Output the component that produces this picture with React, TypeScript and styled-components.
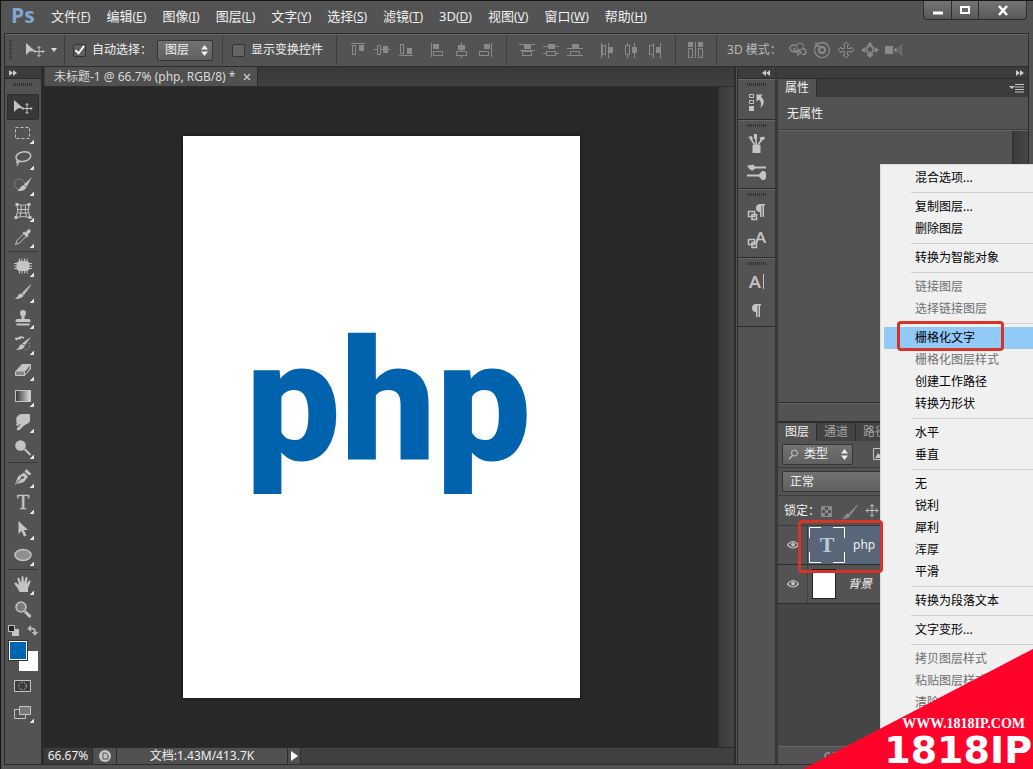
import React from 'react';
import styled, { createGlobalStyle, css } from 'styled-components';

const c = {
  panel: '#535353',
  strip: '#3c3c3c',
  edge: '#2c2c2c',
  light: '#666666',
  text: '#f0f0f0',
  icon: '#c4c4c4',
  dim: '#8a8a8a',
};

const GlobalStyle = createGlobalStyle`
  * { box-sizing: border-box; }
  body {
    margin: 0;
    background: ${c.panel};
    color: ${c.text};
    font-family: "Noto Sans", "Noto Sans CJK SC", sans-serif;
    font-size: 12px;
    line-height: 16px;
    overflow: hidden;
  }
  button, select, input { font: inherit; color: inherit; margin: 0; }
  button { border: 0; padding: 0; background: none; display: flex; align-items: center; justify-content: center; }
  svg { display: block; flex: none; overflow: visible; }
`;

/* ---------- window shell ---------- */

const Window = styled.div`
  position: relative;
  display: flex;
  flex-direction: column;
  height: 100vh;
  overflow: hidden;
  padding: 0 4px 4px 3px;
  background: ${c.panel};
  border-top: 1px solid #151515;
  border-left: 1px solid #151515;
`;

const MenuBar = styled.header`
  display: flex;
  align-items: flex-start;
  height: 32px;
  flex: none;
`;

const Logo = styled.span`
  width: 42px;
  padding-left: 7px;
  color: #7ea7d1;
  font: bold 21px/28px "Open Sans", sans-serif;
`;

const MenuList = styled.nav`
  display: flex;
  flex: 1;
  gap: 16px;
  padding-left: 5px;
`;

const MenuLink = styled.a`
  color: ${c.text};
  text-decoration: none;
  white-space: nowrap;
  font-size: 13px;
  line-height: 31px;
  small { font-size: 12px; }
`;

const WindowControls = styled.div`
  display: flex;
  height: 19px;
  margin-right: 2px;
  border: 1px solid ${c.edge};
  border-top: 0;
  border-radius: 0 0 4px 4px;
  background: linear-gradient(#747474, #585858);
`;

const WindowButton = styled.button<{ $wide?: boolean }>`
  width: ${p => (p.$wide ? 48 : 27)}px;
  & + & { border-left: 1px solid ${c.edge}; }
`;

const OptionsBar = styled.div`
  display: flex;
  align-items: center;
  height: 33px;
  flex: none;
  border: 1px solid ${c.edge};
  border-bottom: 0;
  box-shadow: inset 0 1px ${c.light};
  white-space: nowrap;
  overflow: hidden;
`;

const Rule = styled.i<{ $before?: number; $after?: number }>`
  flex: none;
  width: 1px;
  height: 30px;
  background: #3d3d3d;
  margin: 0 ${p => p.$after ?? 8}px 0 ${p => p.$before ?? 8}px;
`;

const Check = styled.label`
  display: flex;
  align-items: center;
  gap: 6px;
  input {
    appearance: none;
    width: 13px;
    height: 13px;
    border: 1px solid #333;
    border-radius: 2px;
    background: #646464;
  }
  input:checked {
    background: #5f5f5f url("data:image/svg+xml,%3Csvg xmlns='http://www.w3.org/2000/svg' viewBox='0 0 12 12'%3E%3Cpath d='M1.500 5.500L5 9L11 1' fill='none' stroke='white' stroke-width='2'/%3E%3C/svg%3E");
  }
`;

const SelectBox = styled.div<{ $grow?: boolean; $lead?: number }>`
  position: relative;
  display: flex;
  align-items: center;
  justify-content: flex-end;
  flex: ${p => (p.$grow ? 1 : 'none')};
  height: 21px;
  padding-right: 4px;
  border: 1px solid #343434;
  border-radius: 2px;
  background: linear-gradient(#727272, #606060);
  select {
    appearance: none;
    flex: 1;
    border: 0;
    background: none;
    outline: 0;
    width: ${p => (p.$lead ? 58 : 43)}px;
    padding: 0 0 0 ${p => p.$lead ?? 7}px;
  }
`;

const OptionSelect = styled(SelectBox)`
  margin-left: 5px;
`;

const IconSet = styled.div<{ $gap: number; $before?: number; $after?: number }>`
  display: flex;
  gap: ${p => p.$gap}px;
  margin-left: ${p => p.$before ?? 0}px;
  margin-right: ${p => p.$after ?? 0}px;
`;

const ModeLabel = styled.span`
  color: #b8b8b8;
`;

const Workspace = styled.div`
  display: flex;
  flex: 1;
  min-height: 0;
  border: 1px solid ${c.edge};
`;

const Strip = styled.div<{ $end?: boolean }>`
  display: flex;
  align-items: center;
  justify-content: ${p => (p.$end ? 'flex-end' : 'flex-start')};
  flex: none;
  height: 12px;
  padding: 0 4px 0 3px;
  background: ${c.strip};
  border-bottom: 1px solid ${c.edge};
`;

const Grip = styled.i<{ $tall?: boolean }>`
  display: block;
  flex: none;
  ${p =>
    p.$tall
      ? css`
          width: 3px;
          height: 20px;
          margin: 0 13px 0 4px;
          background: repeating-linear-gradient(#353535 0 1px, transparent 1px 2px);
        `
      : css`
          width: 20px;
          height: 3px;
          margin: 4px auto;
          background: repeating-linear-gradient(90deg, #303030 0 1px, transparent 1px 2px);
        `}
`;

/* ---------- tools ---------- */

const ToolColumn = styled.aside`
  display: flex;
  flex-direction: column;
  width: 36px;
  flex: none;
`;

const ToolStack = styled.div`
  display: flex;
  flex-direction: column;
  align-items: center;
  padding-top: 4px;
`;

const Tool = styled.button<{ $active?: boolean; $more?: boolean }>`
  position: relative;
  width: 32px;
  height: 26px;
  border-radius: 2px;
  ${p => p.$active && css`background: #383838; box-shadow: inset 0 0 0 1px #2e2e2e;`}
  ${p =>
    p.$more &&
    css`
      &::after {
        content: '';
        position: absolute;
        right: 5px;
        bottom: 2px;
        width: 4px;
        height: 4px;
        background: linear-gradient(135deg, transparent 50%, #e4e4e4 50%);
      }
    `}
`;

const ToolRule = styled.hr`
  width: 30px;
  height: 1px;
  margin: 1px 0;
  border: 0;
  background: #393939;
`;

const MiniRow = styled.div`
  display: flex;
  justify-content: space-between;
  width: 30px;
  height: 15px;
  padding-top: 2px;
`;

const Swatches = styled.div`
  display: grid;
  grid-template: 10px 10px 10px / 10px 9px 10px;
  margin: 3px 0 2px;
`;

const Swatch = styled.button<{ $front?: boolean }>`
  grid-area: ${p => (p.$front ? '1 / 1 / 3 / 3' : '2 / 2 / 4 / 4')};
  z-index: ${p => (p.$front ? 1 : 0)};
  background: ${p => (p.$front ? '#0066b0' : '#fff')};
  border: 1px solid #fff;
  ${p => p.$front && css`outline: 1px solid #333; margin: 0 1px 1px 0;`}
`;

/* ---------- document ---------- */

const DocumentColumn = styled.main`
  display: flex;
  flex-direction: column;
  flex: 1;
  min-width: 0;
  border-left: 3px solid ${c.edge};
  border-right: 2px solid ${c.edge};
`;

const DocTabs = styled.div`
  display: flex;
  flex: none;
  height: 20px;
  padding-left: 1px;
  background: linear-gradient(#383838, #404040);
  border-bottom: 1px solid ${c.edge};
`;

const DocTab = styled.div`
  display: flex;
  align-items: center;
  gap: 9px;
  padding: 0 7px 0 9px;
  background: #505050;
  border-right: 1px solid ${c.edge};
  color: #dadada;
  white-space: nowrap;
`;

const Stage = styled.div`
  display: flex;
  flex: 1;
  min-height: 0;
`;

const Pasteboard = styled.div`
  display: flex;
  flex: 1;
  align-items: center;
  justify-content: center;
  background: #282828;
`;

const Artboard = styled.div`
  width: 397px;
  height: 562px;
  padding: 164px 0 0 63px;
  background: #fff;
  box-shadow: 0 0 3px #111;
  overflow: hidden;
`;

const ArtText = styled.span`
  display: block;
  color: #0162ae;
  font: 900 169px/204px Roboto, sans-serif;
`;

const ScrollTrack = styled.div`
  width: 16px;
  background: linear-gradient(90deg, #3a3a3a, #464646);
  border-left: 1px solid ${c.edge};
`;

const StatusBar = styled.footer`
  display: flex;
  flex: none;
  height: 17px;
  background: #404040;
  border-top: 1px solid ${c.edge};
`;

const StatusCell = styled.div<{ $w: number; $dark?: boolean }>`
  display: flex;
  align-items: center;
  justify-content: center;
  width: ${p => p.$w}px;
  background: ${p => (p.$dark ? '#3b3b3b' : '#505050')};
  border-right: 1px solid ${c.edge};
  white-space: nowrap;
`;

/* ---------- right side ---------- */

const IconDock = styled.aside`
  display: flex;
  flex-direction: column;
  flex: none;
  width: 41px;
  margin-left: 1px;
  border-left: 1px solid ${c.edge};
  border-right: 3px solid #383838;
`;

const DockGroup = styled.div`
  display: flex;
  flex-direction: column;
  align-items: center;
  padding-bottom: 2px;
  border-bottom: 1px solid ${c.edge};
  box-shadow: inset 0 1px ${c.light};
`;

const DockGrip = styled(Grip)`
  margin-bottom: 3px;
`;

const DockButton = styled.button`
  width: 28px;
  height: 28px;
`;

const Panels = styled.aside`
  display: flex;
  flex-direction: column;
  flex: none;
  width: 250px;
`;

const PanelTabs = styled.div`
  display: flex;
  flex: none;
  height: 18px;
  background: ${c.strip};
`;

const PanelTab = styled.button<{ $active?: boolean }>`
  width: 39px;
  color: ${p => (p.$active ? '#f0f0f0' : '#a5a5a5')};
  background: ${p => (p.$active ? c.panel : '#434343')};
  border-right: 1px solid ${c.edge};
`;

const PanelMenu = styled.button`
  margin-left: auto;
  width: 24px;
`;

const PropertyTitle = styled.div`
  height: 33px;
  padding: 9px;
  flex: none;
  border-bottom: 1px solid #3b3b3b;
`;

const PropertyBody = styled.div`
  display: flex;
  justify-content: flex-end;
  flex: none;
  height: 273px;
  border-top: 1px solid ${c.light};
  border-bottom: 1px solid ${c.edge};
`;

const PanelFoot = styled.div`
  flex: none;
  height: 20px;
  border-top: 1px solid ${c.light};
  border-bottom: 2px solid ${c.edge};
`;

const PanelRow = styled.div<{ $h: number }>`
  display: flex;
  align-items: center;
  flex: none;
  gap: 20px;
  height: ${p => p.$h}px;
  padding: 0 4px;
  border-bottom: 1px solid #3b3b3b;
`;

const LockRow = styled(PanelRow)`
  gap: 0;
  padding-left: 6px;
`;

const FilterIcon = styled.span`
  position: absolute;
  left: 5px;
  top: 4px;
`;

const LayerList = styled.ul`
  flex: 1;
  min-height: 0;
  margin: 0;
  padding: 0;
  list-style: none;
  background: #454545;
`;

const LayerRow = styled.li`
  position: relative;
  display: flex;
  height: 39px;
  background: ${c.panel};
  border-bottom: 1px solid ${c.edge};
`;

const Eye = styled.button`
  width: 30px;
  border-right: 1px solid #404040;
`;

const LayerBody = styled.div<{ $selected?: boolean }>`
  display: flex;
  align-items: center;
  flex: 1;
  gap: ${p => (p.$selected ? 8 : 12)}px;
  padding-left: ${p => (p.$selected ? 1 : 4)}px;
  background: ${p => (p.$selected ? '#596579' : 'transparent')};
`;

const PageThumb = styled.i`
  width: 24px;
  height: 30px;
  background: #fff;
  border: 1px solid #222;
`;

const LayerFooter = styled.div`
  display: flex;
  align-items: center;
  flex: none;
  height: 18px;
  padding-left: 46px;
  border-top: 1px solid ${c.light};
`;

const Marker = styled.i<{ $top: number; $left: number; $w: number; $h: number }>`
  position: absolute;
  z-index: 5;
  top: ${p => p.$top}px;
  left: ${p => p.$left}px;
  width: ${p => p.$w}px;
  height: ${p => p.$h}px;
  border: 3px solid #d63429;
  border-radius: 4px;
  pointer-events: none;
`;

/* ---------- overlays ---------- */

const ContextMenu = styled.div`
  position: absolute;
  z-index: 3;
  top: 163px;
  right: 0;
  bottom: 0;
  width: 153px;
  padding: 2px 0 0 3px;
  background: #f0f0f0;
  border-top: 1px solid #dcdcdc;
  border-left: 1px solid #dcdcdc;
`;

const MenuGroup = styled.div`
  & + &::before {
    content: '';
    display: block;
    height: 1px;
    margin: 3px 0 3px 27px;
    background: #cfcfcf;
  }
`;

const MenuItem = styled.button<{ $active?: boolean }>`
  position: relative;
  width: 100%;
  height: 22px;
  padding-left: 31px;
  justify-content: flex-start;
  white-space: nowrap;
  color: #000;
  background: ${p => (p.$active ? '#91c9f7' : 'transparent')};
  &:disabled { color: #6f6f6f; }
`;

const Corner = styled.div`
  position: absolute;
  z-index: 6;
  right: 0;
  bottom: 0;
  width: 230px;
  height: 120px;
  display: flex;
  flex-direction: column;
  align-items: flex-end;
  justify-content: flex-end;
  background: #ff032b;
  clip-path: polygon(0 100%, 100% 0, 100% 100%);
  color: #fff;
`;

const SiteAddress = styled.span`
  padding-right: 8px;
  font: bold 14px/14px "Liberation Serif", serif;
`;

const SiteName = styled.strong`
  padding-right: 1px;
  font: bold 38px/38px "DejaVu Sans", sans-serif;
`;

/* ---------- drawings ---------- */

const Icon = ({ w = 18, h = 18, color = c.icon, children }: { w?: number; h?: number; color?: string; children: React.ReactNode }) => (
  <svg width={w} height={h} viewBox={`0 0 ${w} ${h}`} fill="none" stroke={color} color={color} aria-hidden="true">
    {children}
  </svg>
);

const fill = { fill: 'currentColor', stroke: 'none' };

const UpDown = () => (
  <Icon w={7} h={11} color="#eee"><path d="M0 4.500L3.500 0L7 4.500zM0 6.500L3.500 11L7 6.500z" {...fill} /></Icon>
);
const Chevrons = ({ left }: { left?: boolean }) => (
  <Icon w={9} h={6} color="#ccc"><path d={left ? 'M4 0v6L0 3zM8 0v6L4 3z' : 'M1 0v6l4-3zM5 0v6l4-3z'} {...fill} /></Icon>
);
const MoveGlyph = () => (
  <Icon w={20}>
    <path d="M1 2v12l3.500-3.500L10 10z" {...fill} />
    <path d="M14 5.500v10M9 10.500h10M12.500 7L14 5.500L15.500 7M12.500 14l1.500 1.500l1.500-1.500M10.500 9L9 10.500L10.500 12M17.500 9l1.500 1.500l-1.500 1.500" />
  </Icon>
);
const EyeGlyph = () => (
  <Icon w={12} h={10}>
    <path d="M.5 5Q6-2 11.500 5Q6 11 .5 5z" strokeWidth="1.200" />
    <circle cx="6" cy="4.500" r="2" {...fill} />
  </Icon>
);
const Brush = <><path d="M16.500 1.500L8 10l2 2L17 2z" {...fill} /><path d="M7.500 10.500q2 .5 2 2.500Q6 17 0 15.500Q3.500 15 4 12.500Q5.500 10 7.500 10.500z" {...fill} /></>;

const toolGroups: { name: string; more?: boolean; active?: boolean; art: React.ReactNode }[][] = [
  [
    { name: '移动', active: true, art: null },
    { name: '矩形选框', more: true, art: <rect x="1.500" y="3.500" width="14" height="11" strokeDasharray="3 2" /> },
    { name: '套索', more: true, art: <><ellipse cx="9.500" cy="6.500" rx="7.500" ry="4.800" transform="rotate(-12 10 7)" strokeWidth="1.500" /><path d="M4 10q-3 1-1 3t2-1t-2 0q1 2 0 4" /></> },
    { name: '快速选择', more: true, art: <><circle cx="5.500" cy="8" r="5" strokeDasharray="1 1.500" /><path d="M18 1l-8 7.500l2.500 2.500zM9.500 9l3 2.500Q9 16.500 3 14.500q3.500-1.500 4-4z" {...fill} /></> },
    { name: '裁剪', more: true, art: <><path d="M3 2.500Q9 4 15 2.500Q13 9 16 15.500Q9 13.500 2 15.500Q5 9 3 2.500zM7 3.500q1 5-1 11M11.500 3.500q-1 5 1 11M4 7.500h10M4 11h10.500" /><path d="M1.500 1h3v3h-3zM13.500 1h3v3h-3zM.5 14h3v3h-3zM14.500 14h3v3h-3z" {...fill} /></> },
    { name: '吸管', more: true, art: <><path d="M10 5.500L3 12.500L1.500 16.500L5.500 15L12.500 8z" /><path d="M8.500 5l1.500-1.500l1.500 1L14 1.500q3-1 2.500 2.500L14 6.500l.5 1.500L13 9.500z" {...fill} /></> },
  ],
  [
    { name: '修复画笔', more: true, art: <><rect x="3" y="4.500" width="12" height="9" rx="2.500" fill="currentColor" /><path d="M5.500 1.500v15M8 1.500v15M10.500 1.500v15M13 1.500v15M0 6.500h18M0 9h18M0 11.500h18" /></> },
    { name: '画笔', more: true, art: Brush },
    { name: '仿制图章', more: true, art: <><path d="M9 1a3 3 0 0 1 3 3q0 2-1.500 3.500V10H15q1.500 0 1.500 2v1h-15v-1q0-2 1.500-2h4.500V7.500Q6 6 6 4a3 3 0 0 1 3-3z" {...fill} /><path d="M2.500 15.500h13" strokeWidth="2" /></> },
    { name: '历史记录画笔', more: true, art: <><path d="M17.500 1.500L11 10L8 8.500zM8 9l3 2Q8 16 1.500 14.500q3.500-.5 4-4z" {...fill} /><path d="M2 5Q6 .5 10 3M1 3.500h6" strokeWidth="1.500" /><path d="M15 8q2 6-5 7" strokeDasharray="1 1.500" /></> },
    { name: '橡皮擦', more: true, art: <><path d="M1.500 10.500L8 3.500h8.500L10.500 10.500z" fill="currentColor" /><path d="M1.500 10.500v4h9v-4M10.500 14.500l6-6.500V4" fill="#888" /></> },
    { name: '渐变', more: true, art: <><defs><linearGradient id="toolGradient"><stop stopColor="#333" /><stop offset="1" stopColor="#ddd" /></linearGradient></defs><rect x="1.500" y="3.500" width="15" height="11" fill="url(#toolGradient)" /></> },
    { name: '涂抹', more: true, art: <path d="M3 4Q5 .5 9 1h6q1.500 0 1 3v4q-1 3-4 3.500l-2 1l-4.500 4.500q-2.500 1-3-1l4-4.500l-1-.5L4 13q-3 0-1-3q-1.500-1-.5-3Q1.500 5 3 4z" {...fill} /> },
    { name: '减淡', more: true, art: <><circle cx="6.500" cy="6.500" r="5.300" {...fill} /><path d="M10.500 10l6 6" strokeWidth="2" /></> },
  ],
  [
    { name: '钢笔', more: true, art: <><path d="M1 16.500L4 8.500L10 4.500l4 4L10 14zM10.500 3.500l2-2.500l5 5l-2.500 1.500z" {...fill} /><path d="M2 15.500L8 10" stroke="#444" /><circle cx="8.500" cy="9.500" r="1.300" fill="#444" stroke="none" /></> },
    { name: '文字', more: true, art: <text x="9" y="15" textAnchor="middle" fontFamily="Liberation Serif" fontSize="20" {...fill} stroke="currentColor" strokeWidth=".4">T</text> },
    { name: '路径选择', more: true, art: <path d="M4.500 1v13l3-3l2.500 5.500l2.500-1L10 10h4z" {...fill} /> },
    { name: '椭圆', more: true, art: <ellipse cx="9" cy="9" rx="8" ry="5.500" fill="#8f8f8f" strokeWidth="1.500" /> },
  ],
  [
    { name: '抓手', more: true, art: <path d="M5.500 17Q4 13 .5 9Q0 7 2 7.500L5 10L3.500 4q0-2 1.500-1.500L7.200 8L7.500 2q1-2 2 0l.5 6l1.500-5.500q1.500-1.500 2 .5L12.500 9L15 5.500q2-.5 1.500 1.500L14 13v4z" {...fill} /> },
    { name: '缩放', art: <><circle cx="7" cy="6" r="5" fill="#7c7c7c" strokeWidth="1.500" /><path d="M11 10.500l5.500 5.500" strokeWidth="3" /></> },
  ],
];

/* Alignment glyphs: guide lines plus an outlined and a solid block. */
type Align = { line: string; box: [number, number, number, number]; solid: [number, number, number, number] };
const alignSets: Align[][] = [
  [
    { line: 'M1 2.500h14', box: [2.5, 4.5, 3, 9], solid: [9, 4, 5, 6] },
    { line: 'M0 8.500h16', box: [3.5, 4.5, 3, 9], solid: [9, 5, 5, 7] },
    { line: 'M1 14.500h14', box: [2.5, 3.5, 3, 9], solid: [9, 7, 5, 6] },
  ],
  [
    { line: 'M2.500 2v14', box: [4.5, 10.5, 9, 4], solid: [4, 3, 6, 5] },
    { line: 'M8.500 1v16', box: [3.5, 10.5, 10, 4], solid: [5, 4, 7, 5] },
    { line: 'M14.500 2v14', box: [2.5, 10.5, 9, 4], solid: [7, 3, 6, 5] },
  ],
  [
    { line: 'M0 3.500h16M1 9.500h15', box: [3.5, 10.5, 9, 4], solid: [5, 4, 7, 4] },
    { line: 'M0 5.500h16M0 12.500h16', box: [3.5, 10.5, 9, 4], solid: [5, 3, 7, 5] },
    { line: 'M0 7.500h16M0 14.500h16', box: [3.5, 10.5, 9, 4], solid: [5, 3, 7, 4] },
  ],
  [
    { line: 'M2.500 2v15M9.500 2v15', box: [3.5, 4.5, 3, 9], solid: [10, 6, 4, 6] },
    { line: 'M4.500 2v15M11.500 2v15', box: [2.5, 4.5, 4, 9], solid: [9, 6, 5, 6] },
    { line: 'M6.500 2v15M13.500 2v15', box: [2.5, 4.5, 4, 9], solid: [9, 6, 5, 6] },
  ],
];
const AlignIcon = ({ line, box, solid }: Align) => (
  <Icon w={16} color={c.dim}>
    <path d={line} />
    <rect x={box[0]} y={box[1]} width={box[2]} height={box[3]} fill={c.panel} />
    <rect x={solid[0]} y={solid[1]} width={solid[2]} height={solid[3]} {...fill} />
  </Icon>
);

const modes3d: [string, React.ReactNode][] = [
  ['旋转', <><circle cx="11" cy="5.500" r="3.500" /><path d="M7.500 4.500Q1 3 1 7t8 4.500M5 7q0 3 5 4M8.500 8.500l3.500 3l-4 3M13 13.500q5 0 4-3t-3-3" strokeWidth="1.500" /></>],
  ['滚动', <><circle cx="9" cy="9" r="3" strokeWidth="2" /><path d="M3 4.500a7.500 7.500 0 1 0 6-3q-3 0-5 2M3 1v4h4" strokeWidth="1.300" /></>],
  ['拖动', <path d="M9 1l3 3h-1.500v3.500H14V6l3 3l-3 3v-1.500h-3.500V14H12l-3 3l-3-3h1.500v-3.500H4V12L1 9l3-3v1.500h3.500V4H6z" />],
  ['滑动', <><circle cx="9" cy="8.500" r="3.500" strokeWidth="2" /><path d="M9 1l3 3H6zM0 9l4-3v6zM18 9l-4-3v6zM9 17l-4-4h8z" {...fill} /></>],
  ['缩放', <><path d="M0 5h8v8H0zM8.500 9l3-3v6z" {...fill} /><path d="M17.500 3.500L12 9l5.500 5.500M16 6v6" /></>],
];

const Linked = <path d="M1.500 8.500h6v5h-6zM5 11.500h4.500v5H5z" strokeWidth="1.500" />;
const Pilcrow = ({ x, y }: { x: number; y: number }) => (
  <path d={`M${x} ${y}h8v1.500h-1V${y + 13}h-1.500V${y + 1.5}h-1V${y + 13}h-1.500V${y + 8}h-1q-3-1-3-4q0-3 3-4z`} {...fill} />
);

const dockGroups: { name: string; art: React.ReactNode }[][] = [
  [{ name: '历史记录', art: <><path d="M2.500 1.500h4v3h-4zM2.500 7.500h4v3h-4z" /><path d="M2 13h5v5H2zM9.500 1.500h6l-1.500 2q6 6-1 11.500q2.500-5-1-8.500l-2.500 2z" {...fill} /></> }],
  [
    { name: '画笔预设', art: <><path d="M5.500 11h8v8h-8z" {...fill} /><path d="M8 11L3 4M9.500 11L8.500 2M11 11l4-6" strokeWidth="1.500" /><path d="M1 3l4-1l1 4zM7 0h3v5H7zM12.500 3.500l4.500-1l1 2l-4 3z" {...fill} /></> },
    { name: '画笔', art: <><path d="M8 5.500h11M0 13.500h12" strokeWidth="2" /><path d="M0 3.500h2l4-1l3 3l-3 3Q3 9 0 3.500zM11 13.500L15 9h2l2 1.500v6L17 18h-2z" {...fill} /></> },
  ],
  [
    { name: '段落样式', art: <>{Linked}<Pilcrow x={10} y={1} /></> },
    { name: '字符样式', art: <>{Linked}<text x="8" y="12" fontFamily="Lato" fontSize="16" fontWeight="bold" {...fill}>A</text></> },
  ],
  [
    { name: '字符', art: <><text x="2" y="16" fontFamily="Lato" fontSize="17" fontWeight="bold" {...fill}>A</text><path d="M16.500 2v15" /></> },
    { name: '段落', art: <Pilcrow x={6} y={4} /> },
  ],
];

const menus: [string, string][] = [
  ['文件', 'F'], ['编辑', 'E'], ['图像', 'I'], ['图层', 'L'], ['文字', 'Y'], ['选择', 'S'],
  ['滤镜', 'T'], ['3D', 'D'], ['视图', 'V'], ['窗口', 'W'], ['帮助', 'H'],
];

const layerMenu: { text: string; off?: boolean; active?: boolean }[][] = [
  [{ text: '混合选项...' }],
  [{ text: '复制图层...' }, { text: '删除图层' }],
  [{ text: '转换为智能对象' }],
  [{ text: '链接图层', off: true }, { text: '选择链接图层', off: true }],
  [{ text: '栅格化文字', active: true }, { text: '栅格化图层样式', off: true }, { text: '创建工作路径' }, { text: '转换为形状' }],
  [{ text: '水平' }, { text: '垂直' }],
  [{ text: '无' }, { text: '锐利' }, { text: '犀利' }, { text: '浑厚' }, { text: '平滑' }],
  [{ text: '转换为段落文本' }],
  [{ text: '文字变形...' }],
  [{ text: '拷贝图层样式', off: true }, { text: '粘贴图层样式', off: true }, { text: '清除图层样式', off: true }],
];

export default function App() {
  return (
    <Window>
      <GlobalStyle />
      <MenuBar>
        <Logo>Ps</Logo>
        <MenuList>
          {menus.map(([label, key]) => (
            <MenuLink href="#" key={key}>{label}<small>(<u>{key}</u>)</small></MenuLink>
          ))}
        </MenuList>
        <WindowControls>
          <WindowButton aria-label="最小化"><Icon w={10} h={10} color="#fff"><path d="M0 8h10" strokeWidth="3" /></Icon></WindowButton>
          <WindowButton aria-label="最大化"><Icon w={10} h={8} color="#fff"><path d="M1 1h8v6H1z" strokeWidth="2" /></Icon></WindowButton>
          <WindowButton aria-label="关闭" $wide><Icon w={10} h={9} color="#fff"><path d="M1 0l8 9M9 0L1 9" strokeWidth="2.500" /></Icon></WindowButton>
        </WindowControls>
      </MenuBar>

      <OptionsBar>
        <Grip $tall />
        <MoveGlyph />
        <button aria-label="工具预设"><Icon w={13} h={5} color="#ddd"><path d="M6 0h6l-3 4z" {...fill} /></Icon></button>
        <Rule $before={6} />
        <Check><input type="checkbox" defaultChecked />自动选择：</Check>
        <OptionSelect>
          <select aria-label="自动选择"><option>图层</option></select>
          <UpDown />
        </OptionSelect>
        <Rule $before={9} $after={9} />
        <Check><input type="checkbox" />显示变换控件</Check>
        <Rule $before={13} $after={13} />
        <IconSet $gap={8} $after={15}>{alignSets[0].map((a, i) => <AlignIcon key={i} {...a} />)}</IconSet>
        <IconSet $gap={8}>{alignSets[1].map((a, i) => <AlignIcon key={i} {...a} />)}</IconSet>
        <Rule $before={13} $after={12} />
        <IconSet $gap={8} $after={16}>{alignSets[2].map((a, i) => <AlignIcon key={i} {...a} />)}</IconSet>
        <IconSet $gap={8}>{alignSets[3].map((a, i) => <AlignIcon key={i} {...a} />)}</IconSet>
        <Rule $before={12} $after={11} />
        <Icon w={16} color={c.dim}><path d="M8.500 1v16M1.500 7.500h4v9h-4zM11.500 7.500h4v9h-4z" /><path d="M1 1h5v5H1zM11 1h5v5h-5z" {...fill} /></Icon>
        <Rule $before={13} $after={10} />
        <ModeLabel>3D 模式：</ModeLabel>
        <IconSet $gap={6} $before={7}>
          {modes3d.map(([name, art]) => <button key={name} aria-label={name}><Icon color={c.dim}>{art}</Icon></button>)}
        </IconSet>
      </OptionsBar>

      <Workspace>
        <ToolColumn>
          <Strip><Chevrons /></Strip>
          <Grip />
          <ToolStack>
            {toolGroups.map((group, i) => (
              <React.Fragment key={i}>
                {i > 0 && <ToolRule />}
                {group.map(t => (
                  <Tool key={t.name} aria-label={t.name} $active={t.active} $more={t.more}>
                    {t.art ? <Icon>{t.art}</Icon> : <MoveGlyph />}
                  </Tool>
                ))}
              </React.Fragment>
            ))}
            <MiniRow>
              <Icon w={11} h={11}><path d="M4 4h7v7H4z" {...fill} /><path d="M.5.5h6v6h-6z" fill="#222" /></Icon>
              <Icon w={11} h={11}><path d="M2 3.500h3q3 0 3 3V9M4 1L1.500 3.500L4 6M5.500 7L8 9.500L10.500 7" strokeWidth="1.500" /></Icon>
            </MiniRow>
            <Swatches>
              <Swatch $front aria-label="前景色" />
              <Swatch aria-label="背景色" />
            </Swatches>
            <Tool aria-label="快速蒙版"><Icon><path d="M.5 3.500h16v11H.5z" fill="#3b3b3b" /><circle cx="8.500" cy="9" r="3.800" strokeDasharray="1.500 1.200" /></Icon></Tool>
            <Tool aria-label="屏幕模式" $more><Icon><path d="M.5 6.500h11v9H.5z" /><path d="M5.500 3.500h11v8h-11z" fill="#777" /></Icon></Tool>
          </ToolStack>
        </ToolColumn>

        <DocumentColumn>
          <DocTabs>
            <DocTab>
              未标题-1 @ 66.7% (php, RGB/8) *
              <button aria-label="关闭文档"><Icon w={6} h={6}><path d="M0 0l6 6M6 0L0 6" strokeWidth="1.500" /></Icon></button>
            </DocTab>
          </DocTabs>
          <Stage>
            <Pasteboard><Artboard><ArtText>php</ArtText></Artboard></Pasteboard>
            <ScrollTrack />
          </Stage>
          <StatusBar>
            <StatusCell $w={49} $dark>66.67%</StatusCell>
            <StatusCell $w={24}><Icon w={12} h={12}><circle cx="6" cy="6" r="6" {...fill} /><path d="M4 3h3l2 2v4H4z" stroke="#555" /></Icon></StatusCell>
            <StatusCell $w={171}>文档:1.43M/413.7K</StatusCell>
            <StatusCell $w={13}><Icon w={7} h={10} color="#fff"><path d="M0 0v10l7-5z" {...fill} /></Icon></StatusCell>
          </StatusBar>
        </DocumentColumn>

        <IconDock>
          <Strip $end><Chevrons left /></Strip>
          {dockGroups.map((group, i) => (
            <DockGroup key={i}>
              <DockGrip />
              {group.map(d => <DockButton key={d.name} aria-label={d.name}><Icon w={20} h={20}>{d.art}</Icon></DockButton>)}
            </DockGroup>
          ))}
        </IconDock>

        <Panels>
          <Strip $end><Chevrons /></Strip>
          <PanelTabs>
            <PanelTab $active>属性</PanelTab>
            <PanelMenu aria-label="面板菜单"><Icon w={15} h={9}><path d="M6 .5h9M6 3h9M6 5.500h9M6 8h9" /><path d="M0 2h6L3 5z" {...fill} /></Icon></PanelMenu>
          </PanelTabs>
          <PropertyTitle>无属性</PropertyTitle>
          <PropertyBody><ScrollTrack /></PropertyBody>
          <PanelFoot />
          <PanelTabs>
            <PanelTab $active>图层</PanelTab>
            <PanelTab>通道</PanelTab>
            <PanelTab>路径</PanelTab>
          </PanelTabs>
          <PanelRow $h={27}>
            <SelectBox $lead={21}>
              <FilterIcon><Icon w={11} h={11}><circle cx="6.500" cy="4" r="3" /><path d="M4.500 6.500L1 10" strokeWidth="1.500" /></Icon></FilterIcon>
              <select aria-label="筛选类型"><option>类型</option></select>
              <UpDown />
            </SelectBox>
            <Icon w={14} h={12}><path d="M.5.5h13v11H.5z" /><path d="M2 10l3-5l3 3l2-2l2 4z" {...fill} /></Icon>
          </PanelRow>
          <PanelRow $h={28}>
            <SelectBox $grow>
              <select aria-label="混合模式"><option>正常</option></select>
              <UpDown />
            </SelectBox>
          </PanelRow>
          <LockRow $h={30}>
            <span>锁定：</span>
            <IconSet $gap={8}>
              <Icon w={13} h={14} color={c.dim}><path d="M1.500 3.500h10v10h-10z" /><path d="M2 4h3v3H2zM8 4h3v3H8zM5 7h3v3H5zM2 10h3v3H2zM8 10h3v3H8z" {...fill} /></Icon>
              <Icon w={17} h={16} color={c.dim}>{Brush}</Icon>
              <Icon w={12} h={14}><path d="M6 1.500v12M0 7.500h12M4 3.500l2-2l2 2M4 11.500l2 2l2-2M2 5.500l-2 2l2 2M10 5.500l2 2l-2 2" /></Icon>
            </IconSet>
          </LockRow>
          <LayerList>
            <LayerRow>
              <Eye aria-label="图层可见性"><EyeGlyph /></Eye>
              <LayerBody $selected>
                <Icon w={36} h={36} color="#fff">
                  <path d="M.5 11V.5H12M24 .5h11.500V11M35.500 25v10.500H24M12 35.500H.5V25" />
                  <text x="18" y="25" textAnchor="middle" fontFamily="Liberation Serif" fontSize="22" fontWeight="bold" fill="#b9cad8" stroke="none">T</text>
                </Icon>
                php
              </LayerBody>
              <Marker $top={-6} $left={20} $w={85} $h={53} />
            </LayerRow>
            <LayerRow>
              <Eye aria-label="图层可见性"><EyeGlyph /></Eye>
              <LayerBody><PageThumb /><em>背景</em></LayerBody>
            </LayerRow>
          </LayerList>
          <LayerFooter><Icon w={16} h={8}><path d="M6 1H3Q1 1 1 4t2 3h3M9 1h3q2 0 2 3t-2 3H9M5 4h6" /></Icon></LayerFooter>
        </Panels>
      </Workspace>

      <ContextMenu>
        {layerMenu.map((group, i) => (
          <MenuGroup key={i}>
            {group.map(item => (
              <MenuItem key={item.text} disabled={item.off} $active={item.active}>
                {item.text}
                {item.active && <Marker $top={-6} $left={13} $w={107} $h={30} />}
              </MenuItem>
            ))}
          </MenuGroup>
        ))}
      </ContextMenu>

      <Corner>
        <SiteAddress>WWW.1818IP.COM</SiteAddress>
        <SiteName>1818IP</SiteName>
      </Corner>
    </Window>
  );
}
